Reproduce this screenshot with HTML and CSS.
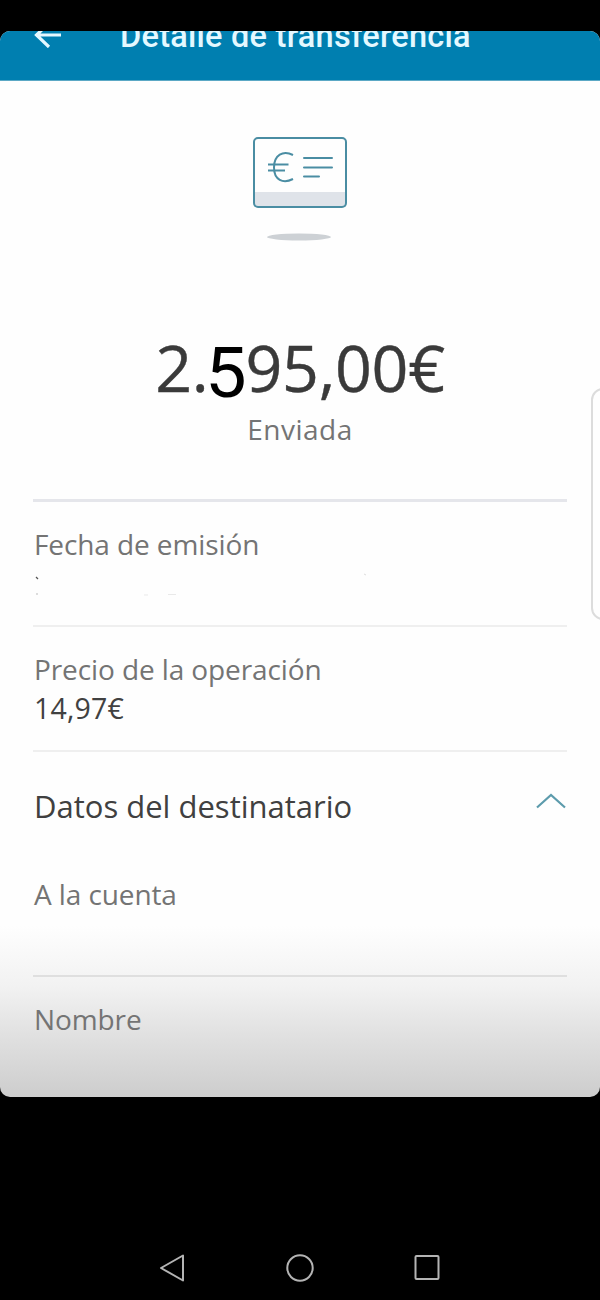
FILE: index.html
```html
<!DOCTYPE html>
<html lang="es">
<head>
<meta charset="utf-8">
<title>Detalle de transferencia</title>
<link rel="stylesheet" href="styles.css">
</head>
<body>
<div class="phone">
  <main class="screen">
    <header class="topbar">
      <svg class="back" width="28" height="26" viewBox="0 0 28 26" fill="none" stroke="#e4f8ff" stroke-width="3.200"><path d="M27 13H2M15 1L2.500 13L15 25"/></svg>
      <h1 class="title">Detalle de transferencia</h1>
    </header>
    <section class="summary">
      <svg class="card-icon" width="96" height="106" viewBox="0 0 96 106" fill="none" stroke="#4a8da3" stroke-width="2">
        <rect x="2" y="56" width="92" height="15" fill="#dfe3e9" stroke="none"/>
        <rect x="2" y="2" width="92" height="69" rx="4"/>
        <path d="M41 19C31 14 22 19 22 31.500C22 44 31 48 41 43M16 28.500H36.500M16 34.500H33"/>
        <path d="M52 22H80M52 31.500H80M52 40.500H67" stroke-linecap="round"/>
        <ellipse cx="47" cy="101" rx="32" ry="3.500" fill="#cdd1d5" stroke="none"/>
      </svg>
      <p class="amount">2.<span class="digit">5</span>95,00€</p>
      <p class="status">Enviada</p>
    </section>
    <div class="rows">
      <section class="row row-first">
        <p class="label date">Fecha de emisión</p>
        <svg class="specks" width="340" height="26" viewBox="0 0 340 26" fill="none"><path d="M2 4L4 6" stroke="#555" stroke-width="1.300"/><path d="M2 21h2" stroke="#bbb"/><path d="M110 22h4M134 21.500h8" stroke="#e9e9e9"/><path d="M330 1l2 1" stroke="#ddd"/></svg>
      </section>
      <section class="row">
        <p class="label price">Precio de la operación</p>
        <p class="value">14,97€</p>
      </section>
      <section class="row row-recipient">
        <div class="heading">
          <h2 class="heading-text">Datos del destinatario</h2>
          <svg class="chevron" width="32" height="18" viewBox="0 0 32 18" fill="none" stroke="#5c9bac" stroke-width="2.200"><path d="M2 15.500L16 3L30 15.500"/></svg>
        </div>
        <p class="label account">A la cuenta</p>
      </section>
      <section class="row row-last">
        <p class="label name">Nombre</p>
      </section>
    </div>
    <div class="side-handle"></div>
  </main>
  <nav class="navbar">
    <svg width="28" height="30" viewBox="0 0 28 30"><path d="M25 2.500V27.500L3 15Z"/></svg>
    <svg width="30" height="30" viewBox="0 0 30 30"><circle cx="15" cy="15" r="12.700"/></svg>
    <svg width="28" height="30" viewBox="0 0 28 30"><rect x="1.500" y="3" width="23" height="23" rx="1"/></svg>
  </nav>
</div>
</body>
</html>
```
FILE: styles.css
```css
* { box-sizing: border-box; }
body { margin: 0; background: #000; font-family: "Open Sans", "Noto Sans", sans-serif; }
p, h1, h2 { margin: 0; font-weight: 400; white-space: nowrap; }
svg { display: block; flex: none; }
.phone { width: 600px; height: 1300px; padding-top: 31px; display: flex; flex-direction: column; background: #000; }
.screen {
  position: relative;
  height: 1066px;
  flex: none;
  overflow: hidden;
  border-radius: 10px;
  background: linear-gradient(#fefefe 0, #fefefe 895px, #f2f2f2 955px, #e2e2e2 1000px, #cdcdcd 1066px);
}
.topbar { height: 50px; padding-left: 34px; display: flex; align-items: flex-start; gap: 58px; background: #007fb0; border-bottom: 1px solid #5ba8c5; }
.back { margin-top: -9px; }
.title { margin-top: -15px; font: 500 32.5px/41px Roboto, sans-serif; letter-spacing: .25px; color: #e4f8ff; }
.summary { height: 418px; display: flex; flex-direction: column; align-items: center; }
.card-icon { margin-top: 55px; }
.amount { margin-top: 80px; font-size: 64.5px; line-height: 90px; height: 90px; letter-spacing: -.3px; color: #3a3a3a; -webkit-text-stroke: .4px #3a3a3a; }
.digit { display: inline-block; width: 37px; margin-left: -2.5px; margin-right: 2.500px; font: 400 70px/70px Roboto, sans-serif; color: #000; vertical-align: -5px; transform: scaleX(1.06); -webkit-text-stroke: 0; }
.status { font-size: 28px; line-height: 40px; margin-top: -3px; letter-spacing: .5px; color: #747474; }
.rows { padding: 0 33px; }
.row { height: 125px; padding: 22px 0 0 1px; border-top: 2px solid #efefef; }
.row-first { height: 126px; border-top: 3px solid #e5e6eb; }
.row-recipient { height: 225px; padding-top: 32px; }
.row-last { border-top-color: #dfdfdf; }
.label { font-size: 28px; line-height: 40px; letter-spacing: -.1px; color: #747474; }
.value { font-size: 28.5px; line-height: 40px; margin-top: -1px; letter-spacing: .2px; color: #414141; }
.specks { margin-top: 9px; }
.heading { display: flex; justify-content: space-between; align-items: flex-start; }
.heading-text { font-size: 31px; line-height: 44px; color: #404040; }
.chevron { margin-top: 8px; }
.account { margin-top: 46px; }
.side-handle { position: absolute; left: 591px; top: 357px; width: 30px; height: 232px; border: 2px solid #dcdcdc; border-radius: 12px; background: #fefefe; }
.navbar { margin-top: auto; height: 66px; padding: 19px 158px 0 158px; display: flex; justify-content: space-between; align-items: flex-start; }
.navbar svg { fill: none; stroke: #b4b4b4; stroke-width: 2; stroke-linejoin: round; }
```
